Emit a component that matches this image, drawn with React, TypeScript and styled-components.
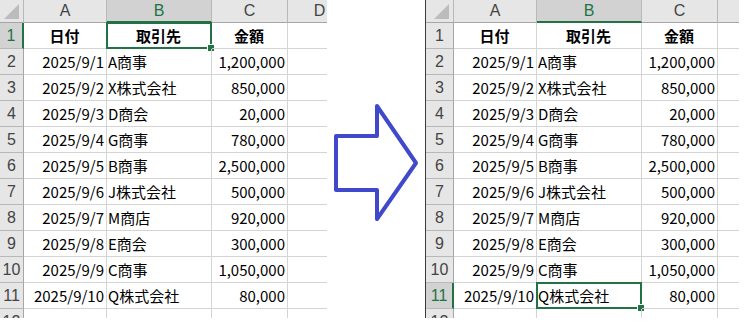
import React from 'react';
import styled, { createGlobalStyle, css } from 'styled-components';

const GREEN = '#217346';
const GRID = '#d4d4d4';
const HEAD_LINE = '#b8b8b8';

const ROWS = [
  ['2025/9/1', 'A商事', '1,200,000'],
  ['2025/9/2', 'X株式会社', '850,000'],
  ['2025/9/3', 'D商会', '20,000'],
  ['2025/9/4', 'G商事', '780,000'],
  ['2025/9/5', 'B商事', '2,500,000'],
  ['2025/9/6', 'J株式会社', '500,000'],
  ['2025/9/7', 'M商店', '920,000'],
  ['2025/9/8', 'E商会', '300,000'],
  ['2025/9/9', 'C商事', '1,050,000'],
  ['2025/9/10', 'Q株式会社', '80,000'],
];

type Cell = { row: number; col: number };

const GlobalStyle = createGlobalStyle`
  body {
    margin: 0;
    background: #ffffff;
    font-family: "Noto Sans CJK JP", "Noto Sans", sans-serif;
  }
`;

const Sheet = ({
  headerWidth,
  columns,
  selected,
  edge,
}: {
  headerWidth: number;
  columns: string[];
  selected: Cell;
  edge?: boolean;
}) => {
  const body = [['日付', '取引先', '金額'], ...ROWS];

  return (
    <SheetFrame $edge={edge} $width={edge ? 314 : 327}>
      <Grid $headerWidth={headerWidth}>
        <Corner>
          <CornerMark />
        </Corner>
        {columns.map((c, i) => (
          <ColHead key={i} $active={selected.col === i}>
            {c}
          </ColHead>
        ))}

        {body.map((r, ri) => (
          <React.Fragment key={ri}>
            <RowHead $active={selected.row === ri}>{ri + 1}</RowHead>
            {r.map((v, ci) => (
              <DataCell key={ci} $align={ri === 0 ? 'center' : ci === 1 ? 'left' : 'right'} $bold={ri === 0}>
                {v}
                {selected.row === ri && selected.col === ci && (
                  <Selection>
                    <Handle />
                  </Selection>
                )}
              </DataCell>
            ))}
            <DataCell $align='left' />
          </React.Fragment>
        ))}

        <RowHead>12</RowHead>
        {columns.map((c, i) => (
          <DataCell key={i} $align='left' />
        ))}
      </Grid>
    </SheetFrame>
  );
};

const Arrow = () => (
  <ArrowBox>
    <svg width='98' height='318' viewBox='0 0 98 318'>
      <path
        d='M9 136 L50 136 L50 106 L89 163 L50 219 L50 190 L9 190 Z'
        fill='none'
        stroke='#4048cc'
        strokeWidth='4'
        strokeLinejoin='round'
      />
    </svg>
  </ArrowBox>
);

const App = () => (
  <>
    <GlobalStyle />
    <Page>
      <Sheet headerWidth={24} columns={['A', 'B', 'C', 'D']} selected={{ row: 0, col: 1 }} />
      <Arrow />
      <Sheet headerWidth={28} columns={['A', 'B', 'C', '']} selected={{ row: 10, col: 1 }} edge />
    </Page>
  </>
);

export default App;

const Page = styled.div`
  display: flex;
  align-items: flex-start;
  width: 756px;
  height: 331px;
  background: #ffffff;
`;

const SheetFrame = styled.div<{ $edge?: boolean; $width: number }>`
  flex: none;
  width: ${(p) => p.$width}px;
  height: 318px;
  overflow: hidden;
  box-sizing: border-box;
  ${(p) =>
    p.$edge &&
    css`
      border-left: 1px solid #3a3a3a;
    `}
`;

const Grid = styled.div<{ $headerWidth: number }>`
  display: grid;
  grid-template-columns: ${(p) => p.$headerWidth}px 83px 105px 76px 64px;
  grid-template-rows: 23px repeat(12, 26px);
`;

const headCell = css`
  box-sizing: border-box;
  background: #e6e6e6;
  color: #444444;
  font-family: "Liberation Sans", Arial, sans-serif;
  font-size: 16px;
  display: flex;
  align-items: center;
  justify-content: center;
`;

const Corner = styled.div`
  ${headCell};
  position: relative;
  border-right: 1px solid ${HEAD_LINE};
  border-bottom: 1px solid #a6a6a6;
`;

const CornerMark = styled.div`
  position: absolute;
  right: 4px;
  bottom: 3px;
  width: 15px;
  height: 15px;
  background: #bcbcbc;
  clip-path: polygon(100% 0, 100% 100%, 0 100%);
`;

const ColHead = styled.div<{ $active?: boolean }>`
  ${headCell};
  border-right: 1px solid ${HEAD_LINE};
  border-bottom: 1px solid #a6a6a6;
  ${(p) =>
    p.$active &&
    css`
      background: #d2d2d2;
      color: ${GREEN};
      border-bottom: 2px solid ${GREEN};
    `}
`;

const RowHead = styled.div<{ $active?: boolean }>`
  ${headCell};
  border-right: 1px solid #a6a6a6;
  border-bottom: 1px solid ${HEAD_LINE};
  ${(p) =>
    p.$active &&
    css`
      background: #d2d2d2;
      color: ${GREEN};
      border-right: 2px solid ${GREEN};
    `}
`;

const DataCell = styled.div<{ $align: 'left' | 'center' | 'right'; $bold?: boolean }>`
  position: relative;
  box-sizing: border-box;
  border-right: 1px solid ${GRID};
  border-bottom: 1px solid ${GRID};
  padding: 0 2px 0 1px;
  display: flex;
  align-items: center;
  justify-content: ${(p) => (p.$align === 'left' ? 'flex-start' : p.$align === 'right' ? 'flex-end' : 'center')};
  font-size: 15px;
  font-weight: ${(p) => (p.$bold ? 700 : 400)};
  color: #000000;
  white-space: nowrap;
`;

const Selection = styled.div`
  position: absolute;
  left: -1px;
  top: -1px;
  right: -1px;
  bottom: -1px;
  border: 2px solid ${GREEN};
  pointer-events: none;
`;

const Handle = styled.div`
  position: absolute;
  right: -5px;
  bottom: -5px;
  width: 6px;
  height: 6px;
  background: ${GREEN};
  border: 1px solid #ffffff;
`;

const ArrowBox = styled.div`
  flex: none;
  width: 98px;
  height: 318px;
`;
